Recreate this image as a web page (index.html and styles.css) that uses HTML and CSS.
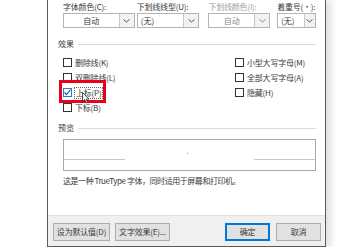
FILE: index.html
```html
<!DOCTYPE html>
<html lang="zh-CN">
<head>
    <meta charset="UTF-8">
    <title>字体</title>
    <link rel="stylesheet" href="styles.css">
</head>
<body>
    <div class="dialog">
        <div class="content">
            <div class="font-row">
                <div class="field field-a">
                    <span class="label">字体颜色(C):</span>
                    <div class="select centered"><span class="value">自动</span><span class="arrow"><svg width="7" height="4" viewBox="0 0 7 4"><path d="M0.5 0.5 L3.5 3 L6.5 0.5" fill="none" stroke="#555" stroke-width="1"/></svg></span></div>
                </div>
                <div class="field field-b">
                    <span class="label">下划线线型(U):</span>
                    <div class="select"><span class="value">(无)</span><span class="arrow"><svg width="7" height="4" viewBox="0 0 7 4"><path d="M0.5 0.5 L3.5 3 L6.5 0.5" fill="none" stroke="#555" stroke-width="1"/></svg></span></div>
                </div>
                <div class="field field-c">
                    <span class="label disabled">下划线颜色(I):</span>
                    <div class="select centered disabled"><span class="value">自动</span><span class="arrow"><svg width="7" height="4" viewBox="0 0 7 4"><path d="M0.5 0.5 L3.5 3 L6.5 0.5" fill="none" stroke="#888" stroke-width="1"/></svg></span></div>
                </div>
                <div class="field field-d">
                    <span class="label">着重号(·):</span>
                    <div class="select"><span class="value">(无)</span><span class="arrow"><svg width="7" height="4" viewBox="0 0 7 4"><path d="M0.5 0.5 L3.5 3 L6.5 0.5" fill="none" stroke="#555" stroke-width="1"/></svg></span></div>
                </div>
            </div>

            <div class="group-title"><span>效果</span><span class="rule"></span></div>
            <div class="effects">
                <div class="col">
                    <div class="check"><span class="box"></span>删除线(K)</div>
                    <div class="check"><span class="box"></span>双删除线(L)</div>
                    <div class="check marked">
                        <span class="box checked"><svg width="9" height="9" viewBox="0 0 9 9"><path d="M1.5 4.5 L3.5 6.5 L7.5 1.5" fill="none" stroke="#0a64c8" stroke-width="1.2"/></svg></span><span class="focus">上标(P)</span>
                        <span class="highlight"></span>
                        <svg class="cursor" width="8" height="12" viewBox="0 0 8 12"><path d="M0.5 0.5 L0.5 9.5 L2.7 7.6 L4.2 11 L5.6 10.4 L4.2 7.1 L7 7.1 Z" fill="#fff" stroke="#222" stroke-width="0.8"/></svg>
                    </div>
                    <div class="check"><span class="box"></span>下标(B)</div>
                </div>
                <div class="col">
                    <div class="check"><span class="box"></span>小型大写字母(M)</div>
                    <div class="check"><span class="box"></span>全部大写字母(A)</div>
                    <div class="check"><span class="box"></span>隐藏(H)</div>
                </div>
            </div>

            <div class="group-title preview-title"><span>预览</span><span class="rule"></span></div>
            <div class="preview">
                <span class="base left"></span>
                <span class="dot"></span>
                <span class="base right"></span>
            </div>
            <p class="note">这是一种 TrueType 字体，同时适用于屏幕和打印机。</p>
        </div>
        <div class="button-bar">
            <button class="btn btn-default">设为默认值(D)</button>
            <button class="btn btn-effects">文字效果(E)...</button>
            <span class="spacer"></span>
            <button class="btn btn-small primary">确定</button>
            <button class="btn btn-small">取消</button>
        </div>
    </div>
</body>
</html>
```

FILE: styles.css
```css
body {
    margin: 0;
    background-color: #fff;
    color: #3a3a3a;
    font-family: "Noto Sans CJK SC", "Noto Sans", sans-serif;
    font-size: 8px;
    line-height: 12px;
}

.dialog {
    margin-left: 47px;
    width: 277px;
    height: 246px;
    border: 1px solid #5a5a5a;
    border-top: none;
    background-color: #fff;
    box-shadow: 5px 0 7px rgba(0, 0, 0, 0.13);
    display: flex;
    flex-direction: column;
}

.content {
    flex: 1;
    padding: 0 9px 0 10px;
}

/* Font colour / underline row */
.font-row {
    display: flex;
    padding: 1px 0 0 5px;
}

.field {
    display: flex;
    flex-direction: column;
}

.field-a { width: 72px; margin-right: 2px; }
.field-b { width: 63px; margin-right: 9px; }
.field-c { width: 62px; margin-right: 7px; }
.field-d { width: 39px; }

.label {
    height: 12px;
    white-space: nowrap;
    letter-spacing: -0.2px;
}

.label.disabled {
    color: #a0a0a0;
}

.select {
    display: flex;
    height: 15px;
    border: 1px solid #b4b4b4;
    box-sizing: border-box;
    background-color: #fff;
}

.select .value {
    flex: 1;
    padding-left: 3px;
    line-height: 13px;
}

.select.centered .value {
    text-align: center;
    padding-left: 0;
}

.select.disabled .value {
    color: #8a8a8a;
}

.select .arrow {
    width: 14px;
    border-left: 1px solid #c8c8c8;
    background-color: #f2f2f2;
    display: flex;
    align-items: center;
    justify-content: center;
}

.field-d .select .arrow {
    width: 10px;
}

/* Group titles */
.group-title {
    display: flex;
    align-items: center;
    margin-top: 10px;
}

.group-title .rule {
    flex: 1;
    margin-left: 4px;
    border-top: 1px solid #dcdcdc;
}

.preview-title {
    margin-top: 7px;
}

/* Effects */
.effects {
    display: grid;
    grid-template-columns: 172px 1fr;
    padding-left: 5px;
    margin-top: 5px;
}

.check {
    position: relative;
    display: flex;
    align-items: center;
    height: 15px;
    white-space: nowrap;
    letter-spacing: -0.2px;
}

.check .box {
    width: 9px;
    height: 9px;
    box-sizing: border-box;
    border: 1px solid #333;
    background-color: #fff;
    margin-right: 3px;
    display: flex;
}

.check .box.checked {
    border-color: #2b79d0;
}

.check .box.checked svg {
    margin: -1px;
}

.focus {
    outline: 1px dotted #666;
    padding: 0 1px;
    line-height: 10px;
}

.highlight {
    position: absolute;
    left: -4px;
    top: -5px;
    width: 47px;
    height: 23px;
    box-sizing: border-box;
    border: 3px solid #e8001c;
}

.cursor {
    position: absolute;
    left: 19px;
    top: 7px;
}

/* Preview */
.preview {
    position: relative;
    margin: 5px 0 0 5px;
    height: 32px;
    box-sizing: border-box;
    border: 1px solid #a9a9a9;
    background-color: #fff;
}

.preview .base {
    position: absolute;
    top: 19px;
    width: 61px;
    border-top: 1px solid #c8c8c8;
}

.preview .left { left: 0; }
.preview .right { right: 0; }

.preview .dot {
    position: absolute;
    left: 123px;
    top: 13px;
    width: 1px;
    height: 1px;
    background-color: #999;
}

.note {
    margin: 4px 0 0 5px;
    white-space: nowrap;
    letter-spacing: -0.45px;
}

/* Buttons */
.button-bar {
    display: flex;
    align-items: flex-start;
    height: 31px;
    box-sizing: border-box;
    padding: 7px 4px 0 5px;
    border-top: 1px solid #dfdfdf;
    background-color: #f0f0f0;
}

.btn {
    height: 18px;
    padding: 0;
    border: 1px solid #adadad;
    background-color: #e1e1e1;
    color: #3a3a3a;
    font-family: inherit;
    font-size: 8px;
    line-height: 14px;
    letter-spacing: -0.2px;
}

.btn-default { width: 57px; margin-right: 5px; }
.btn-effects { width: 55px; }
.btn-small { width: 45px; margin-left: 6px; }

.spacer { flex: 1; }

.btn.primary {
    border: 1px solid #0078d7;
    box-shadow: inset 0 0 0 1px #0078d7;
}
```
